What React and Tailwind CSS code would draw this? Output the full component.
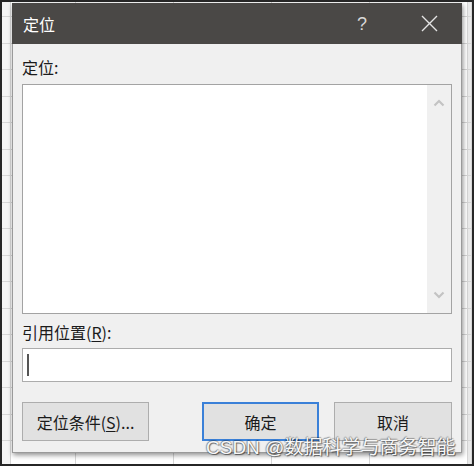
import React from 'react';

const CJK = "font-['Microsoft_YaHei','Noto_Sans_CJK_SC',sans-serif]";

const cols = ['w-[9px] bg-[#f4f4f4]', 'w-[65px]', 'w-[98px]', 'w-[98px]', 'w-[98px]', 'w-[98px]', 'w-[4px] bg-[#e9e9e9]'];

const SheetGrid = () => {
  const rows = Array.from({ length: 18 }, (_, i) => i);
  return (
    <div className="flex flex-col">
      {rows.map((r) => (
        <div key={r} className={`flex ${r === 0 ? 'h-[15px]' : 'h-[26.5px]'}`}>
          {cols.map((c, i) => (
            <div key={i} className={`${c} shrink-0 border-r border-b border-[#d6d6d6]`} />
          ))}
        </div>
      ))}
    </div>
  );
};

const Chevron = ({ down }) => (
  <svg width="12" height="8" viewBox="0 0 12 8" className="block">
    <polyline
      points={down ? '1.5,1.5 6,6 10.5,1.5' : '1.5,6.5 6,2 10.5,6.5'}
      fill="none"
      stroke="#c3c3c3"
      strokeWidth="2.2"
    />
  </svg>
);

const CloseIcon = () => (
  <svg width="17" height="17" viewBox="0 0 17 17" className="block">
    <path d="M1 1 L16 16 M16 1 L1 16" stroke="#e4e4e4" strokeWidth="1.4" fill="none" />
  </svg>
);

const Button = ({ children, primary, className = '' }) => (
  <button
    className={`h-[39px] bg-[#e1e1e1] text-[16px] leading-[20px] text-[#1b1b1b] ${
      primary ? 'border-2 border-[#3a80d8]' : 'border border-[#adadad]'
    } ${className}`}
  >
    {children}
  </button>
);

export default function App() {
  return (
    <div className={`relative w-[474px] h-[466px] overflow-hidden border-2 border-[#262626] bg-white ${CJK}`}>
      <SheetGrid />

      {/* dialog */}
      <div className="absolute left-[10px] top-[1px] w-[450px] h-[450px] flex flex-col bg-[#f0f0f0] border border-[#9a9a9a] shadow-[1px_2px_5px_rgba(0,0,0,0.45)]">
        <div className="h-[41px] -mx-px -mt-px flex items-center bg-[#4a4846] pl-[11px] pr-[24px]">
          <span className="text-[16px] leading-[20px] text-white">定位</span>
          <span className="ml-auto mr-[54px] text-[18px] leading-[20px] text-[#d8d8d8] font-['Liberation_Sans',sans-serif]">?</span>
          <CloseIcon />
        </div>

        <div className="flex flex-col px-[9px] pt-[13px]">
          <div className="h-[20px] text-[16px] leading-[20px] text-[#1b1b1b]">定位:</div>

          <div className="mt-[7px] h-[230px] flex border border-[#a3a3a3] bg-white">
            <div className="flex-1" />
            <div className="w-[24px] flex flex-col items-center justify-between bg-[#f0f0f0] py-[14px]">
              <Chevron />
              <Chevron down />
            </div>
          </div>

          <div className="mt-[8px] h-[20px] text-[16px] leading-[20px] text-[#1b1b1b]">
            引用位置(<span className="underline underline-offset-2">R</span>):
          </div>

          <div className="mt-[6px] h-[34px] flex items-center border border-[#acacac] bg-white pl-[4px]">
            <div className="w-[2px] h-[22px] bg-[#555]" />
          </div>

          <div className="mt-[20px] flex">
            <Button className="w-[127px]">
              定位条件(<span className="underline underline-offset-2">S</span>)...
            </Button>
            <Button primary className="ml-auto w-[117px]">确定</Button>
            <Button className="ml-[15px] w-[118px]">取消</Button>
          </div>
        </div>
      </div>

      {/* watermark */}
      <div className="absolute left-[204px] top-[434px] whitespace-nowrap text-[19px] leading-[24px] text-[#f7f7f7] font-['Liberation_Sans','Noto_Sans_CJK_SC',sans-serif] [text-shadow:1px_1px_1px_rgba(0,0,0,0.55),-1px_0_1px_rgba(0,0,0,0.35),0_-1px_1px_rgba(0,0,0,0.3)]">
        CSDN @数据科学与商务智能
      </div>
    </div>
  );
}
